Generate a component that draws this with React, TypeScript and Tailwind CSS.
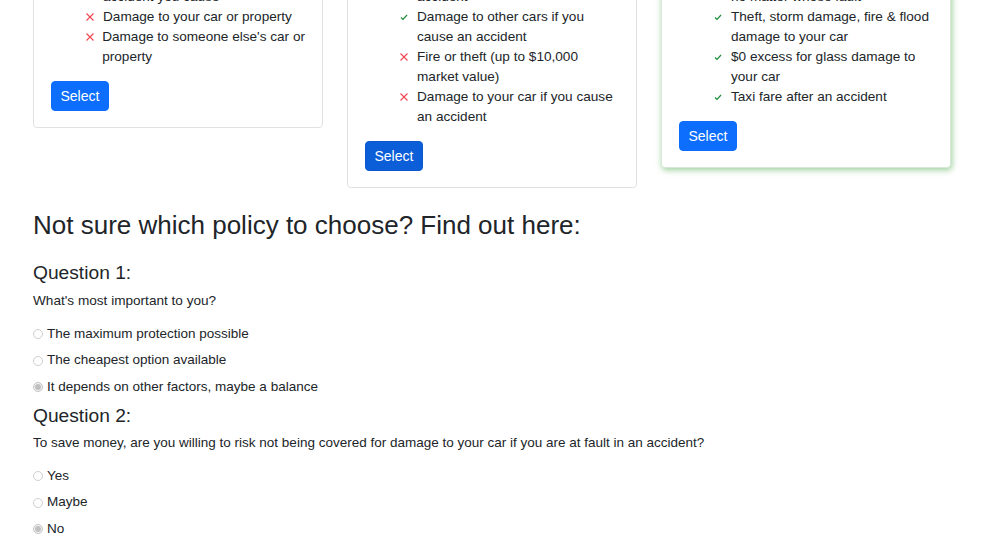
import React from "react";

const Cross = () => (
  <svg width="10" height="10" viewBox="0 0 10 10" className="shrink-0">
    <path d="M1.5 1.5 L8.5 8.5 M8.5 1.5 L1.5 8.5" stroke="#f0444f" strokeWidth="1.1" fill="none" />
  </svg>
);
const Check = () => (
  <svg width="10" height="10" viewBox="0 0 10 10" className="shrink-0">
    <path d="M2 5.5 L4 7.5 L8 3" stroke="#1d8a3a" strokeWidth="1.2" fill="none" />
  </svg>
);

type Item = { ok: boolean; lines: string[] };

function Card({ items, first, shadow, dark }: { items: Item[]; first: string; shadow?: boolean; dark?: boolean }) {
  return (
    <div
      className={
        "w-[290px] shrink-0 rounded-[4px] bg-white border px-[17px] pt-[16px] pb-[16px] " +
        (shadow
          ? "border-[#d7e8d7] shadow-[1px_2px_6px_rgba(70,165,70,0.55)]"
          : "border-[#dfe1e4]")
      }
    >
      <ul className="pl-[34px] text-[13.6px] leading-[20px] text-[#212529] whitespace-nowrap">
        <li className="pl-[18px]">{first}</li>
        {items.map((it, i) => (
          <li key={i} className="flex">
            <span className="w-[18px] h-[20px] flex items-center">{it.ok ? <Check /> : <Cross />}</span>
            <span>
              {it.lines.map((l, j) => (
                <span key={j} className="block">
                  {l}
                </span>
              ))}
            </span>
          </li>
        ))}
      </ul>
      <button
        className={
          "mt-[14px] h-[30px] px-[8.5px] rounded-[4px] text-white text-[14px] border " +
          (dark ? "bg-[#0b5ed7] border-[#0a58ca]" : "bg-[#0d6efd] border-[#0d6efd]")
        }
      >
        Select
      </button>
    </div>
  );
}

function Radio({ label, checked }: { label: string; checked?: boolean }) {
  return (
    <div className="flex items-center h-[20px] gap-[4px]">
      <span
        className={
          "w-[10px] h-[10px] rounded-full border flex items-center justify-center " +
          (checked ? "border-[#c4c4c4] bg-[#f3f3f3]" : "border-[#cfcfcf] bg-white")
        }
      >
        {checked && <span className="w-[6px] h-[6px] rounded-full bg-[#c0c0c0]" />}
      </span>
      <span>{label}</span>
    </div>
  );
}

export default function App() {
  return (
    <div
      className="bg-white text-[#212529] min-h-[540px] overflow-hidden px-[33px]"
      style={{ fontFamily: '"Liberation Sans", Arial, sans-serif' }}
    >
      <div className="flex items-start gap-[24px] -mt-[30px]">
        <Card
          first="accident you cause"
          items={[
            { ok: false, lines: ["Damage to your car or property"] },
            { ok: false, lines: ["Damage to someone else's car or", "property"] },
          ]}
        />
        <Card
          dark
          first="accident"
          items={[
            { ok: true, lines: ["Damage to other cars if you", "cause an accident"] },
            { ok: false, lines: ["Fire or theft (up to $10,000", "market value)"] },
            { ok: false, lines: ["Damage to your car if you cause", "an accident"] },
          ]}
        />
        <Card
          shadow
          first="no matter whose fault"
          items={[
            { ok: true, lines: ["Theft, storm damage, fire & flood", "damage to your car"] },
            { ok: true, lines: ["$0 excess for glass damage to", "your car"] },
            { ok: true, lines: ["Taxi fare after an accident"] },
          ]}
        />
      </div>

      <h2 className="mt-[22px] text-[26px] leading-[31px] font-normal">
        Not sure which policy to choose? Find out here:
      </h2>

      <h3 className="mt-[20px] text-[19.2px] leading-[24px]">Question 1:</h3>
      <p className="mt-[6px] text-[13.6px] leading-[20px]">What's most important to you?</p>
      <div className="mt-[13px] flex flex-col gap-[6.5px] text-[13.5px]">
        <Radio label="The maximum protection possible" />
        <Radio label="The cheapest option available" />
        <Radio label="It depends on other factors, maybe a balance" checked />
      </div>

      <h3 className="mt-[7px] text-[19.2px] leading-[24px]">Question 2:</h3>
      <p className="mt-[5px] text-[13.5px] leading-[20px] whitespace-nowrap">
        To save money, are you willing to risk not being covered for damage to your car if you are at fault in an accident?
      </p>
      <div className="mt-[13px] flex flex-col gap-[6.5px] text-[13.5px]">
        <Radio label="Yes" />
        <Radio label="Maybe" />
        <Radio label="No" checked />
      </div>
    </div>
  );
}
